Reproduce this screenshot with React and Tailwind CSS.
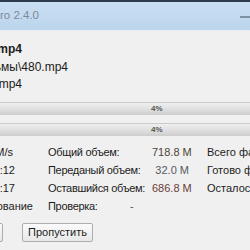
import React from "react";

const font = { fontFamily: '"Liberation Sans", Arial, sans-serif' };

// text that is cut by the left window edge: right-aligned box, overflow spills left
const Clip = ({ w, className, children }) => (
  <div className={`flex justify-end whitespace-nowrap shrink-0 ${w} ${className || ""}`}>
    {children}
  </div>
);

const Bar = ({ className }) => (
  <div
    className={`h-[13px] w-full border-t border-[#cbcbcb] bg-gradient-to-b from-[#efefef] via-[#e0e0e0] to-[#cdcdcd] flex items-center ${className}`}
  >
    <span className="ml-[151px] text-[8px] leading-none text-[#555] font-bold">4%</span>
  </div>
);

const rows = [
  { left: "2.3 M/s", lw: "w-[13px]", gap: "ml-[35px]", label: "Общий объем:", value: "718.8 M", vc: "text-[#4d4536]", right: "Всего файлов:" },
  { left: "00:00:12", lw: "w-[15px]", gap: "ml-[33px]", label: "Переданый объем:", value: "32.0 M", vc: "text-[#555a60]", right: "Готово файлов:" },
  { left: "00:04:17", lw: "w-[15px]", gap: "ml-[33px]", label: "Оставшийся объем:", value: "686.8 M", vc: "text-[#6a3d38]", right: "Осталось файлов:" },
];

export default function App() {
  return (
    <div className="w-[250px] h-[250px] overflow-hidden bg-[#f0f0f0] text-[12px] text-[#1c1c1c]" style={font}>
      <div className="h-[2px] bg-[#2c3b4c]" />
      <div className="h-[29px] bg-gradient-to-b from-[#c9def2] to-[#bcd5ec] flex items-center justify-between border-b border-[#e9eef3]">
        <Clip w="w-[39px]" className="text-[#7b8b9b] text-[11.5px]">Copy Pro 2.4.0</Clip>
        <div className="w-[10px] h-[2px] bg-[#7f93a6] mt-[1px]" />
      </div>

      <div className="pt-[9px]">
        <Clip w="w-[22px]" className="h-[18px] items-center font-bold">480.mp4</Clip>
        <Clip w="w-[68px]" className="h-[17px] items-center">D:\Фильмы\480.mp4</Clip>
        <Clip w="w-[22px]" className="h-[17px] items-center">E:\480.mp4</Clip>
      </div>

      <Bar className="mt-[10px]" />
      <Bar className="mt-[8px]" />

      <div className="mt-[7px] text-[11px]">
        {rows.map((r, i) => (
          <div key={i} className="h-[18px] flex items-center whitespace-nowrap">
            <Clip w={r.lw}>{r.left}</Clip>
            <div className={`${r.gap} w-[104px] shrink-0 tracking-[-0.3px]`}>{r.label}</div>
            <div className={`w-[37px] shrink-0 text-right ${r.vc}`}>{r.value}</div>
            <div className="ml-[18px]">{r.right}</div>
          </div>
        ))}
        <div className="h-[18px] flex items-center whitespace-nowrap">
          <Clip w="w-[33px]">Копирование</Clip>
          <div className="ml-[15px] w-[82px] shrink-0 tracking-[-0.3px]">Проверка:</div>
          <div className="text-[#555]">-</div>
        </div>
      </div>

      <div className="mt-[8px] flex">
        <div className="ml-[-67px] w-[70px] h-[19px] rounded-[2px] border border-[#adadad] bg-gradient-to-b from-[#fbfbfb] to-[#e6e6e6]" />
        <div className="ml-[19px] w-[71px] h-[19px] rounded-[2px] border border-[#adadad] bg-gradient-to-b from-[#fbfbfb] to-[#e8e8e8] flex items-center justify-center text-[11px] text-[#1c1c1c]">
          Пропустить
        </div>
      </div>
    </div>
  );
}
